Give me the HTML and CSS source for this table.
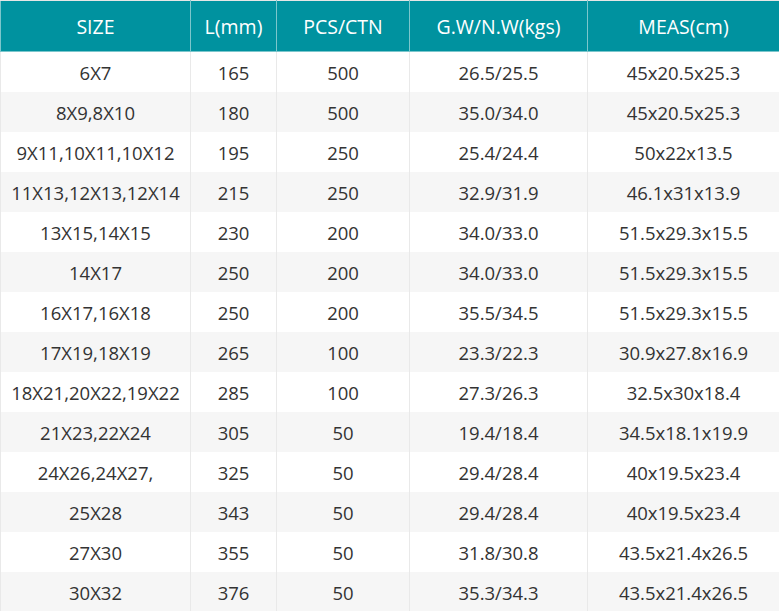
FILE: index.html
```html
<!DOCTYPE html>
<html>
<head>
<meta charset="utf-8">
<link rel="stylesheet" href="styles.css">
</head>
<body>
<table class="spec">
<colgroup>
<col class="c1"><col class="c2"><col class="c3"><col class="c4"><col class="c5">
</colgroup>
<thead>
<tr><th>SIZE</th><th>L(mm)</th><th>PCS/CTN</th><th>G.W/N.W(kgs)</th><th>MEAS(cm)</th></tr>
</thead>
<tbody>
<tr><td>6X7</td><td>165</td><td>500</td><td>26.5/25.5</td><td>45x20.5x25.3</td></tr>
<tr><td>8X9,8X10</td><td>180</td><td>500</td><td>35.0/34.0</td><td>45x20.5x25.3</td></tr>
<tr><td>9X11,10X11,10X12</td><td>195</td><td>250</td><td>25.4/24.4</td><td>50x22x13.5</td></tr>
<tr><td>11X13,12X13,12X14</td><td>215</td><td>250</td><td>32.9/31.9</td><td>46.1x31x13.9</td></tr>
<tr><td>13X15,14X15</td><td>230</td><td>200</td><td>34.0/33.0</td><td>51.5x29.3x15.5</td></tr>
<tr><td>14X17</td><td>250</td><td>200</td><td>34.0/33.0</td><td>51.5x29.3x15.5</td></tr>
<tr><td>16X17,16X18</td><td>250</td><td>200</td><td>35.5/34.5</td><td>51.5x29.3x15.5</td></tr>
<tr><td>17X19,18X19</td><td>265</td><td>100</td><td>23.3/22.3</td><td>30.9x27.8x16.9</td></tr>
<tr><td>18X21,20X22,19X22</td><td>285</td><td>100</td><td>27.3/26.3</td><td>32.5x30x18.4</td></tr>
<tr><td>21X23,22X24</td><td>305</td><td>50</td><td>19.4/18.4</td><td>34.5x18.1x19.9</td></tr>
<tr><td>24X26,24X27,</td><td>325</td><td>50</td><td>29.4/28.4</td><td>40x19.5x23.4</td></tr>
<tr><td>25X28</td><td>343</td><td>50</td><td>29.4/28.4</td><td>40x19.5x23.4</td></tr>
<tr><td>27X30</td><td>355</td><td>50</td><td>31.8/30.8</td><td>43.5x21.4x26.5</td></tr>
<tr><td>30X32</td><td>376</td><td>50</td><td>35.3/34.3</td><td>43.5x21.4x26.5</td></tr>
</tbody>
</table>
</body>
</html>
```
FILE: styles.css
```css
html, body {
  margin: 0;
  padding: 0;
  background: #ffffff;
}
.spec {
  width: 779px;
  table-layout: fixed;
  border-collapse: collapse;
  font-family: "Open Sans", "Liberation Sans", sans-serif;
  color: #333333;
  border: 1px solid #e6e6e6;
}
.c1 { width: 190px; }
.c2 { width: 86px; }
.c3 { width: 133px; }
.c4 { width: 178px; }
.c5 { width: 192px; }
.spec th {
  background: #00929f;
  color: #ffffff;
  font-weight: 400;
  font-size: 19.5px;
  height: 50px;
  padding: 0;
  text-align: center;
  border: 1px solid #7cc6cc;
  border-top-color: #e6e6e6;
}
.spec td {
  font-size: 18.5px;
  height: 40px;
  padding: 0;
  text-align: center;
  border-left: 1px solid #e9e9e9;
  border-right: 1px solid #e9e9e9;
  white-space: nowrap;
}
.spec tbody tr:nth-child(even) td {
  background: #f6f6f6;
}
```
